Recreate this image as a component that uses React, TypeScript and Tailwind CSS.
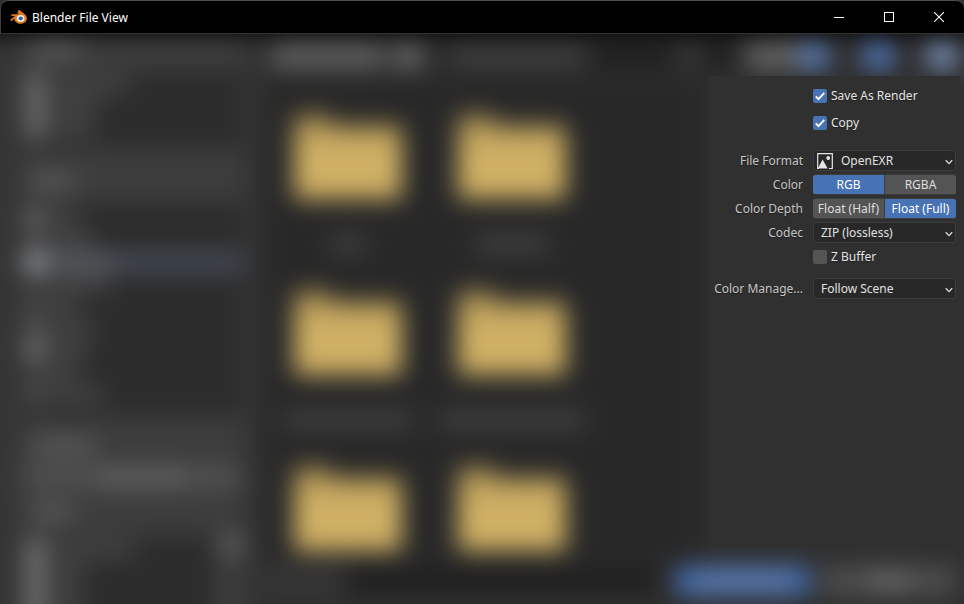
import React, { useId, useState } from "react";

function BlenderLogo() {
  return (
    <svg viewBox="0 0 24 20" className="h-[14px] w-[17px] shrink-0" aria-hidden="true">
      <path
        d="M11.6 0.4c0.8-0.5 1.7-0.3 2.4 0.2l7 5.3c2 1.6 3 3.8 3 6 0 4.500-4.200 7.900-9 7.900s-8.600-3-9-7.200l-3.600 2.800c-1.500 1.100-3-0.800-1.700-2l6.300-5H2.700c-1.700 0-1.700-2.300 0-2.300h9.900L10.200 3.900 11.400 2.600z"
        fill="#dd7a1c"
      />
      <ellipse cx="15" cy="12" rx="5.600" ry="4.900" fill="#f4ece4" />
      <ellipse cx="15.200" cy="11.900" rx="3" ry="2.700" fill="#2f66a0" />
    </svg>
  );
}

function TitleBar() {
  return (
    <header className="flex h-[34px] shrink-0 items-center rounded-t-lg border-t border-b border-l border-t-[#4c4c4c] border-b-[#333] border-l-[#3c3c3c] bg-black pl-[9px] font-['Noto_Sans','Open_Sans',sans-serif]">
      <BlenderLogo />
      <h1 className="ml-[5px] flex-1 pt-px text-[12px] leading-4 text-white">Blender File View</h1>
      <button className="flex h-full w-[50px] items-center justify-center" aria-label="Minimize">
        <span className="h-px w-[10px] bg-white" />
      </button>
      <button className="flex h-full w-[50px] items-center justify-center" aria-label="Maximize">
        <span className="size-[10px] border border-white" />
      </button>
      <button className="flex h-full w-[50px] items-center justify-center" aria-label="Close">
        <svg viewBox="0 0 10 10" className="size-[10px]" stroke="#fff" strokeWidth="1.100">
          <path d="M0 0L10 10M10 0L0 10" />
        </svg>
      </button>
    </header>
  );
}

/* Out-of-focus file browser behind the options panel. */

const volumes = ["w-[80px]", "w-[50px]", "w-[46px]"];
const places = ["w-[32px]", "w-[44px]", "w-[64px]", "w-[62px]", "w-[30px]", "w-[46px]", "w-[40px]", "w-[30px]", "w-[56px]"];
const placeIcons = ["bg-[#7c7c7c]", "bg-[#505050]", "bg-[#b4b4b4]", "bg-[#484848]", "bg-[#505050]", "bg-[#606060]", "bg-[#8a8a8a]", "bg-[#484848]", "bg-[#585858]"];
const recents = ["w-[86px]", "w-[36px]", "w-[34px]", "w-[34px]"];
const folders = ["w-[36px]", "w-[72px]", "w-[130px]", "w-[146px]", "w-[60px]", "w-[60px]"];

function SectionTitle({ width }: { width: string }) {
  return (
    <div className="flex h-6 items-center pl-2">
      <div className={`h-[14px] rounded bg-[#606060] ${width}`} />
    </div>
  );
}

function ListRow({ icon, width, active }: { icon: string; width: string; active?: boolean }) {
  return (
    <div className={`flex h-[22px] items-center gap-1 px-1 ${active ? "bg-[#444a55]" : ""}`}>
      <div className={`h-[18px] w-[18px] ${icon}`} />
      <div className={`h-[14px] ${active ? "bg-[#5f6065]" : "bg-[#4a4a4a]"} ${width}`} />
    </div>
  );
}

function Sidebar() {
  return (
    <div className="flex w-[284px] shrink-0 flex-col bg-[#353535] pr-[14px] pl-[50px]">
      <div className="flex flex-col bg-[#3d3d3d]">
        <div className="pt-1">
          <SectionTitle width="w-[52px]" />
        </div>
        <div className="mt-2 mb-[22px] h-[78px] bg-[#2c2c2c] pt-[3px]">
          {volumes.map((w, i) => (
            <ListRow key={i} icon="bg-[#858585]" width={w} />
          ))}
        </div>
        <SectionTitle width="w-[44px]" />
        <div className="mt-2 mb-[18px] h-[214px] bg-[#2c2c2c] pt-[5px]">
          {places.map((w, i) => (
            <ListRow key={i} icon={placeIcons[i]} width={w} active={i === 2} />
          ))}
        </div>
        <SectionTitle width="w-[66px]" />
        <div className="mt-2 mb-[10px] flex h-[22px] items-center justify-center bg-[#525252]">
          <div className="ml-5 h-[14px] w-[86px] bg-[#666]" />
        </div>
        <div className="pt-[3px]">
          <SectionTitle width="w-[44px]" />
        </div>
        <div className="mt-[10px] flex justify-between">
          <div className="h-[110px] w-[192px] bg-[#2c2c2c] pt-[3px]">
            {recents.map((w, i) => (
              <ListRow key={i} icon="bg-[#8c8c8c]" width={w} />
            ))}
          </div>
          <div className="size-5 bg-[#666]" />
        </div>
      </div>
    </div>
  );
}

function Toolbar() {
  return (
    <div className="flex h-[43px] shrink-0 items-center bg-[#303030] pr-9 pl-2">
      <div className="h-6 w-[112px] bg-[#606060]" />
      <div className="ml-3 h-6 w-6 bg-[#6e6e6e]" />
      <div className="ml-5 flex h-6 flex-1 items-center bg-[#1e1e1e] pl-2">
        <div className="h-[18px] w-[140px] bg-[#424242]" />
      </div>
      <div className="ml-1 flex h-6 w-[62px] items-center bg-[#1e1e1e] pl-1">
        <div className="size-5 bg-[#3c3c3c]" />
      </div>
      <div className="ml-2 h-6 w-[54px] bg-[#666]" />
      <div className="h-6 w-7 bg-[#5d84c4]" />
      <div className="ml-9 h-6 w-7 bg-[#5480cb]" />
      <div className="ml-9 h-6 w-7 bg-[#819ccb]" />
    </div>
  );
}

function Folder({ label }: { label: string }) {
  return (
    <div className="flex h-[176px] flex-col items-center">
      <div className="w-[108px]">
        <div className="h-[10px] w-9 bg-[#a68d53]" />
        <div className="h-[74px] border-t-[14px] border-[#b09556] bg-[#cfb064]" />
      </div>
      <div className={`mt-9 h-[18px] bg-[#414141] ${label}`} />
    </div>
  );
}

function Backdrop() {
  return (
    <div
      className="-mx-7 -mb-7 flex min-h-0 min-w-0 overflow-hidden blur-[12px] [grid-area:1/1]"
      aria-hidden="true"
    >
      <Sidebar />
      <div className="flex min-w-0 flex-1 flex-col bg-[#303030] pl-2">
        <Toolbar />
        <div className="flex min-h-0 flex-1 overflow-hidden bg-[#282828]">
          <div className="grid flex-1 auto-rows-max grid-cols-[164px_164px] overflow-hidden pt-[38px] pl-[2px]">
            {folders.map((w, i) => (
              <Folder key={i} label={w} />
            ))}
          </div>
          <div className="w-[288px] shrink-0 bg-[#303030]" />
        </div>
        <div className="flex h-[70px] shrink-0 items-start bg-[#2f2f2f] pt-[5px] pr-[36px]">
          <div className="flex h-[26px] flex-1 items-center bg-[#1f1f1f]">
            <div className="h-[26px] w-[82px] bg-[#363636]" />
          </div>
          <div className="ml-4 flex h-[28px] w-[134px] items-center justify-center bg-[#426db2]">
            <div className="h-[14px] w-[94px] bg-[#6683b3]" />
          </div>
          <div className="ml-3 flex h-[28px] w-[134px] items-center justify-center bg-[#4f4f4f]">
            <div className="h-[14px] w-10 bg-[#6e6e6e]" />
          </div>
        </div>
      </div>
    </div>
  );
}

/* Output options */

function Check({ label, initial }: { label: string; initial: boolean }) {
  const [on, setOn] = useState(initial);
  return (
    <label className="ml-[104px] flex h-[21px] items-center gap-1 text-[#e4e4e4]">
      <span className="grid size-[14px] place-items-center">
        <input
          type="checkbox"
          checked={on}
          onChange={(e) => setOn(e.target.checked)}
          className="size-[14px] appearance-none rounded-[2px] bg-[#545454] [grid-area:1/1] checked:bg-[#4772b3]"
        />
        {on && (
          <svg
            viewBox="0 0 14 14"
            className="pointer-events-none size-[14px] [grid-area:1/1]"
            fill="none"
            stroke="#fff"
            strokeWidth="1.800"
          >
            <path d="M2.800 7.400L5.500 10.200L11.300 3.800" />
          </svg>
        )}
      </span>
      {label}
    </label>
  );
}

function Choice({ label, value, picture }: { label: string; value: string; picture?: boolean }) {
  const id = useId();
  return (
    <div className="flex h-[21px] items-center gap-[10px]">
      <label htmlFor={id} className="w-[94px] text-right whitespace-nowrap text-[#c6c6c6]">
        {label}
      </label>
      <div className="grid h-full flex-1 items-center">
        <select
          id={id}
          className={`h-[21px] w-full appearance-none rounded-[3px] border border-[#3d3d3d] bg-[#282828] text-[#e0e0e0] [grid-area:1/1] ${picture ? "pl-[27px]" : "pl-[7px]"}`}
        >
          <option>{value}</option>
        </select>
        {picture && (
          <svg viewBox="0 0 16 16" className="pointer-events-none ml-1 size-4 [grid-area:1/1]" fill="none">
            <path d="M2 15.500H0.700V0.700H15.300V15.500H12" stroke="#e6e6e6" strokeWidth="1.200" />
            <path d="M0.800 15.600L5.600 6.600L10.600 15.600Z" fill="#e6e6e6" />
            <circle cx="11.200" cy="5" r="1.900" fill="#e6e6e6" />
          </svg>
        )}
        <svg
          viewBox="0 0 8 6"
          className="pointer-events-none mt-[3px] mr-[3px] h-[6px] w-2 justify-self-end [grid-area:1/1]"
          fill="none"
          stroke="#dcdcdc"
          strokeWidth="1.300"
        >
          <path d="M0.800 1.200L4 4.600L7.200 1.200" />
        </svg>
      </div>
    </div>
  );
}

function Segments({ label, options, initial }: { label: string; options: string[]; initial: number }) {
  const [picked, setPicked] = useState(initial);
  const id = useId();
  return (
    <div className="flex h-[21px] items-center gap-[10px]" role="group" aria-labelledby={id}>
      <span id={id} className="w-[94px] text-right text-[#c6c6c6]">
        {label}
      </span>
      <div className="grid h-[21px] flex-1 grid-cols-2 gap-px overflow-hidden rounded-[3px] border-y border-[#3d3d3d] bg-[#3d3d3d]">
        {options.map((option, i) => (
          <button
            key={option}
            aria-pressed={picked === i}
            onClick={() => setPicked(i)}
            className={`whitespace-nowrap ${picked === i ? "bg-[#4772b3] text-white" : "bg-[#545454] text-[#dedede]"}`}
          >
            {option}
          </button>
        ))}
      </div>
    </div>
  );
}

function OptionsPanel() {
  return (
    <aside className="z-10 mt-[42px] mr-1 mb-14 flex w-[251px] flex-col gap-[3px] justify-self-end bg-[#303030] pt-[9px] pr-1 font-['Noto_Sans','Open_Sans',sans-serif] text-[12px] leading-4 [grid-area:1/1] [text-shadow:0_1px_1px_rgba(0,0,0,0.400)]">
      <div className="mb-[14px] flex flex-col gap-[6px]">
        <Check label="Save As Render" initial />
        <Check label="Copy" initial />
      </div>
      <Choice label="File Format" value="OpenEXR" picture />
      <Segments label="Color" options={["RGB", "RGBA"]} initial={0} />
      <Segments label="Color Depth" options={["Float (Half)", "Float (Full)"]} initial={1} />
      <Choice label="Codec" value="ZIP (lossless)" />
      <Check label="Z Buffer" initial={false} />
      <div className="mt-2">
        <Choice label="Color Manage..." value="Follow Scene" />
      </div>
    </aside>
  );
}

export default function App() {
  return (
    <div className="flex h-screen flex-col overflow-hidden bg-[#303030]">
      <TitleBar />
      <main className="grid min-h-0 flex-1 grid-cols-1 grid-rows-1 overflow-hidden bg-black">
        <Backdrop />
        <OptionsPanel />
      </main>
    </div>
  );
}
